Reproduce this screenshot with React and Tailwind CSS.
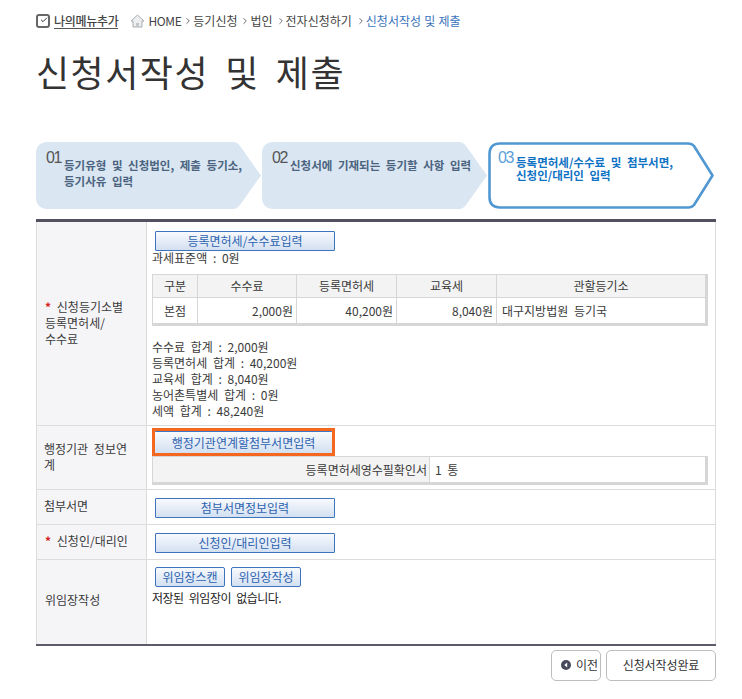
import { Check, ChevronRight } from 'lucide-react';

const font = { fontFamily: '"Noto Sans CJK KR", "Liberation Sans", sans-serif' };

// Blue gradient form button
const FormButton = ({ label, className = '' }) => (
  <button className={`block h-5 border border-[#3d74bd] bg-gradient-to-b from-[#f8fafd] to-[#d3e0f1] text-[12px] leading-[16px] text-[#2b62b0] rounded-[1px] ${className}`}>
    {label}
  </button>
);

// Step arrow with an svg shape behind the text
const Step = ({ num, text, active, width }) => (
  <div className={`relative h-[67px] ${width}`}>
    <svg className="absolute left-0 top-0" width="226" height="67" viewBox="0 0 226 67">
      {active ? (
        <path d="M12 1.5H200Q204 1.5 206 4L224.5 33.5L206 63Q204 65.5 200 65.5H12Q1.5 65.5 1.5 55V12Q1.5 1.5 12 1.5Z" fill="#fff" stroke="#5198d3" strokeWidth="2.6" strokeLinejoin="round" />
      ) : (
        <path d="M12 0H197Q201 0 204 4L225 33.5L204 63Q201 67 197 67H12Q0 67 0 55V12Q0 0 12 0Z" fill="#dae6f2" />
      )}
    </svg>
    <div className="relative flex pl-[10px] pt-[6px]">
      <span className={`w-[18px] shrink-0 font-['Liberation_Sans'] text-[16px] leading-[20px] tracking-[-1.5px] ${active ? 'text-[#5d9fd8]' : 'text-[#555]'}`}>{num}</span>
      <span className={`whitespace-pre-line font-bold text-[11.5px] ${active ? 'pt-[8px] leading-[12.5px] text-[#0f73c4]' : 'pt-[9px] leading-[16px] text-[#4a6480]'}`}>{text}</span>
    </div>
  </div>
);

const Req = () => <span className="text-[#d81e1e] font-bold">* </span>;

const th = 'h-[23px] border border-[#d6d6d6] bg-[#f3f3f3] font-normal text-center';
const td = 'border border-[#d6d6d6] bg-white';

export default function App() {
  return (
    <div style={font} className="w-[742px] h-[699px] bg-white text-[12px] text-[#3a3a3a] overflow-hidden [word-spacing:3px]">
      <div className="pl-[36px] pr-[26px]">
        {/* Breadcrumb */}
        <div className="flex items-center h-[20px] mt-[11px] text-[12px] text-[#444]">
          <span className="flex h-[14px] w-[14px] items-center justify-center rounded-[3px] border-2 border-[#666]">
            <Check size={12} strokeWidth={3} className="text-[#333] -mt-[2px] ml-[2px]" />
          </span>
          <span className="ml-[4px] border-b border-[#555] leading-[15px] font-medium tracking-[-0.3px]">나의메뉴추가</span>
          <svg className="ml-[12px]" width="15" height="14" viewBox="0 0 15 14">
            <path d="M7.5 1L1 7h2v6h9V7h2z" fill="#eceef0" stroke="#a9adb1" />
            <rect x="6" y="9" width="3" height="4" fill="#c4c8cc" />
          </svg>
          <span className="ml-[3px] tracking-[-0.4px]">HOME</span>
          <ChevronRight size={10} className="ml-[2px] text-[#555]" />
          <span>등기신청</span>
          <ChevronRight size={10} className="ml-[3px] text-[#555]" />
          <span>법인</span>
          <ChevronRight size={10} className="ml-[3px] text-[#555]" />
          <span>전자신청하기</span>
          <ChevronRight size={10} className="ml-[4px] text-[#555]" />
          <span className="text-[#3a74bd] [word-spacing:0.5px]">신청서작성 및 제출</span>
        </div>

        <h1 className="mt-[17px] h-[47px] text-[36px] leading-[47px] font-normal text-[#333] tracking-[1.5px] [word-spacing:6.5px]">신청서작성 및 제출</h1>

        {/* Steps */}
        <div className="mt-[47px] flex">
          <Step num="01" width="w-[226px]" text={'등기유형 및 신청법인, 제출 등기소,\n등기사유 입력'} />
          <Step num="02" width="w-[226px]" text="신청서에 기재되는 등기할 사항 입력" />
          <Step num="03" width="w-[228px]" active text={'등록면허세/수수료 및 첨부서면,\n신청인/대리인 입력'} />
        </div>

        {/* Form table */}
        <table className="mt-[10px] w-[680px] table-fixed border-collapse border-t-[3px] border-t-[#54505f] border-b-2 border-b-[#5c5a6b]">
          <colgroup>
            <col className="w-[110px]" />
            <col />
          </colgroup>
          <tbody>
            <tr className="h-[205px]">
              <th className="border border-[#dcdcdc] bg-[#f5f5f8] pl-[8px] pb-[2px] text-left font-normal leading-[16px]">
                <Req />신청등기소별<br />등록면허세/<br />수수료
              </th>
              <td className="border border-[#dcdcdc] px-[5px] pt-[9px] align-top">
                <FormButton label="등록면허세/수수료입력" className="ml-[3px] w-[180px]" />
                <div className="h-[16px] mt-[-1px] leading-[16px]">과세표준액 : 0원</div>
                <table className="mt-[8px] w-[556px] table-fixed border-collapse border-r-[3px] border-b-[3px] border-[#d6d6d6]">
                  <colgroup>
                    <col className="w-[45px]" />
                    <col className="w-[99px]" />
                    <col className="w-[100px]" />
                    <col className="w-[100px]" />
                    <col />
                  </colgroup>
                  <tbody>
                    <tr>
                      <th className={`${th} pb-[1px]`}>구분</th>
                      <th className={`${th} pb-[1px]`}>수수료</th>
                      <th className={`${th} pb-[1px]`}>등록면허세</th>
                      <th className={`${th} pb-[1px]`}>교육세</th>
                      <th className={`${th} pb-[1px]`}>관할등기소</th>
                    </tr>
                    <tr className="h-[27px]">
                      <td className={`${td} text-center`}>본점</td>
                      <td className={`${td} pr-[3px] text-right`}>2,000원</td>
                      <td className={`${td} pr-[3px] text-right`}>40,200원</td>
                      <td className={`${td} pr-[3px] text-right`}>8,040원</td>
                      <td className={`${td} pl-[5px]`}>대구지방법원 등기국</td>
                    </tr>
                  </tbody>
                </table>
                <div className="mt-[13px] leading-[16px]">
                  <div>수수료 합계 : 2,000원</div>
                  <div>등록면허세 합계 : 40,200원</div>
                  <div>교육세 합계 : 8,040원</div>
                  <div>농어촌특별세 합계 : 0원</div>
                  <div>세액 합계 : 48,240원</div>
                </div>
              </td>
            </tr>
            <tr className="h-[64px]">
              <th className="border border-[#dcdcdc] bg-[#f5f5f8] pl-[7px] pr-[2px] pb-[2px] text-left font-normal leading-[16px]">행정기관 정보연<br />계</th>
              <td className="border border-[#dcdcdc] px-[5px] pt-[2px] align-top">
                <div className="w-[183px] border-[3px] border-[#f5671f]">
                  <FormButton label="행정기관연계할첨부서면입력" className="w-full !h-[22px] border-x-0 border-b-0" />
                </div>
                <table className="w-[556px] table-fixed border-collapse border-r-[3px] border-b-[3px] border-[#d6d6d6]">
                  <tbody>
                    <tr className="h-[27px]">
                      <th className={`${th} w-[277px] pr-[2px] !text-right`}>등록면허세영수필확인서</th>
                      <td className={`${td} pl-[5px]`}>1 통</td>
                    </tr>
                  </tbody>
                </table>
              </td>
            </tr>
            <tr className="h-[35px]">
              <th className="border border-[#dcdcdc] bg-[#f5f5f8] pl-[7px] pb-[2px] text-left font-normal">첨부서면</th>
              <td className="border border-[#dcdcdc] px-[8px] pt-[2px]"><FormButton label="첨부서면정보입력" className="w-[180px]" /></td>
            </tr>
            <tr className="h-[35px]">
              <th className="border border-[#dcdcdc] bg-[#f5f5f8] pl-[8px] pb-[2px] text-left font-normal"><Req />신청인/대리인</th>
              <td className="border border-[#dcdcdc] px-[8px] pt-[2px]"><FormButton label="신청인/대리인입력" className="w-[180px]" /></td>
            </tr>
            <tr className="h-[85px]">
              <th className="border border-[#dcdcdc] bg-[#f5f5f8] pl-[8px] pb-[4px] text-left font-normal">위임장작성</th>
              <td className="border border-[#dcdcdc] px-[5px] pt-[7px] align-top">
                <div className="ml-[3px] flex gap-[6px]">
                  <FormButton label="위임장스캔" className="w-[70px] rounded-[2px]" />
                  <FormButton label="위임장작성" className="w-[70px] rounded-[2px]" />
                </div>
                <div className="mt-[3px] leading-[16px] tracking-[-0.5px] text-[#222]">저장된 위임장이 없습니다.</div>
              </td>
            </tr>
          </tbody>
        </table>

        {/* Bottom actions */}
        <div className="mt-[4px] flex w-[680px] justify-end gap-[5px]">
          <button className="flex h-[31px] w-[50px] items-center gap-[5px] rounded-[5px] border border-[#bdbdbd] bg-white pl-[9px] text-[#333]">
            <svg width="10" height="10" viewBox="0 0 10 10">
              <circle cx="5" cy="5" r="5" fill="#474a5c" />
              <path d="M6.2 2.6L3.3 5l2.9 2.4z" fill="#fff" />
            </svg>
            이전
          </button>
          <button className="h-[31px] w-[110px] rounded-[5px] border border-[#bdbdbd] bg-white tracking-[-0.1px] text-[#333]">신청서작성완료</button>
        </div>
      </div>
    </div>
  );
}
